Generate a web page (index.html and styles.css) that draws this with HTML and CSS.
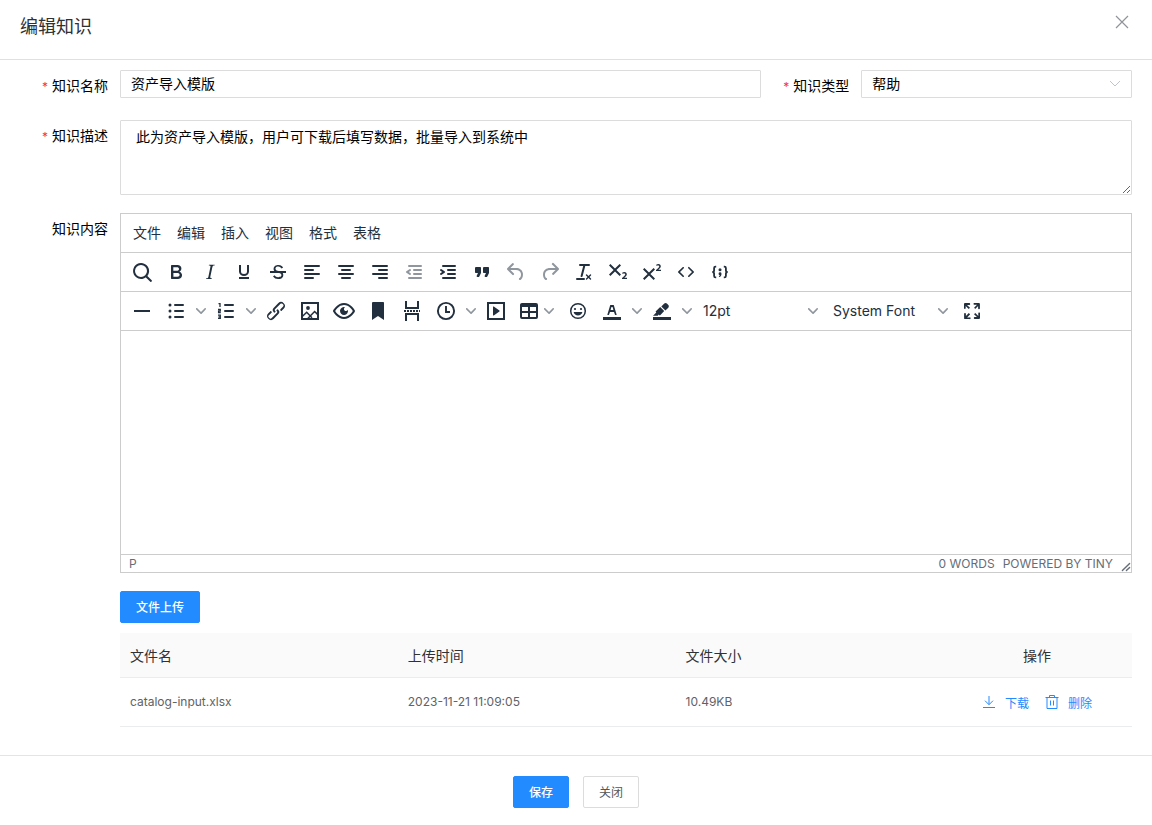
FILE: index.html
```html
<!DOCTYPE html>
<html lang="zh-CN">
<head>
<meta charset="utf-8">
<meta name="viewport" content="width=device-width, initial-scale=1">
<title>编辑知识</title>
<link rel="stylesheet" href="styles.css">
</head>
<body>
<svg class="sprite" aria-hidden="true">
  <symbol id="chevron" viewBox="0 0 10 10"><path d="M8.7 2.2c.3-.3.8-.3 1 0 .4.4.4.9 0 1.2L5.7 7.8c-.3.3-.9.3-1.2 0L.2 3.4a.8.8 0 0 1 0-1.2c.3-.3.8-.3 1.1 0L5 6l3.7-3.8z"/></symbol>
</svg>
<div class="dialog" role="dialog" aria-labelledby="dialog-title">
  <header class="dialog-header">
    <h1 class="dialog-title" id="dialog-title">编辑知识</h1>
    <button class="close" type="button" aria-label="关闭对话框"><svg width="14" height="14" viewBox="0 0 14 14"><path d="M1 1l12 12M13 1L1 13" fill="none" stroke="#909399" stroke-width="1.2"/></svg></button>
  </header>

  <form class="form" id="knowledge">
    <div class="row row-split">
      <label class="label required" for="name">知识名称</label>
      <input class="field" id="name" type="text" value="资产导入模版">
      <label class="label required" for="type">知识类型</label>
      <div class="select-wrap">
        <select class="field" id="type"><option>帮助</option></select>
        <svg class="select-arrow" width="12" height="8" viewBox="0 0 12 8"><path d="M1 1l5 5 5-5" fill="none" stroke="#c0c4cc"/></svg>
      </div>
    </div>
    <div class="row">
      <label class="label required" for="desc">知识描述</label>
      <textarea class="field area" id="desc">此为资产导入模版，用户可下载后填写数据，批量导入到系统中</textarea>
    </div>
    <div class="row">
      <span class="label" id="content-label">知识内容</span>
      <div class="content">
        <div class="editor">
          <div class="menubar">
            <button type="button">文件</button><button type="button">编辑</button><button type="button">插入</button><button type="button">视图</button><button type="button">格式</button><button type="button">表格</button>
          </div>
          <div class="toolbar">
            <button class="tool" type="button" aria-label="查找"><svg viewBox="0 0 24 24"><path d="M16 17.3a8 8 0 1 1 1.4-1.4l4.3 4.4a1 1 0 0 1-1.4 1.4l-4.4-4.3zm-5-.3a6 6 0 1 0 0-12 6 6 0 0 0 0 12z"/></svg></button>
            <button class="tool" type="button" aria-label="粗体"><svg viewBox="0 0 24 24"><path d="M7.8 19c-.3 0-.5 0-.6-.2l-.2-.5V5.7c0-.2 0-.4.2-.5l.6-.2h5c1.5 0 2.7.3 3.5 1 .7.6 1.1 1.4 1.1 2.5a3 3 0 0 1-.6 1.9c-.4.6-1 1-1.6 1.2.4.1.9.3 1.3.6s.8.7 1 1.2c.4.4.5 1 .5 1.6 0 1.3-.4 2.3-1.3 3-.8.7-2.1 1-3.8 1H7.8zm5-8.3c.6 0 1.2-.1 1.6-.5.4-.3.6-.7.6-1.3 0-1.1-.8-1.7-2.3-1.7H9.3v3.5h3.4zm.5 6c.7 0 1.3-.1 1.7-.4.4-.4.6-.9.6-1.5s-.2-1-.7-1.4c-.4-.3-1-.4-2-.4H9.4v3.8h4z" fill-rule="evenodd"/></svg></button>
            <button class="tool" type="button" aria-label="斜体"><svg viewBox="0 0 24 24"><path d="M16.7 4.7l-.1.9h-.3c-.6 0-1 0-1.4.3-.3.3-.4.6-.5 1.1l-2.1 9.8v.6c0 .5.4.8 1.4.8h.2l-.2.8H8l.2-.8h.2c1.1 0 1.8-.5 2-1.5l2-9.8.1-.5c0-.6-.4-.8-1.4-.8h-.3l.2-.9h5.8z"/></svg></button>
            <button class="tool" type="button" aria-label="下划线"><svg viewBox="0 0 24 24"><path d="M8 5v6.5c0 2 1.8 3.5 4 3.5s4-1.5 4-3.5V5" fill="none" stroke="currentColor" stroke-width="2"/><path d="M7 17h10v2H7z"/></svg></button>
            <button class="tool" type="button" aria-label="删除线"><svg viewBox="0 0 24 24"><path d="M15.6 8.5c-.5-.7-1-1.1-1.3-1.3-.6-.4-1.3-.6-2-.6-2.7 0-2.8 1.7-2.8 2.1 0 1.6 1.8 2 3.2 2.3 4.4.9 4.6 2.8 4.6 3.9 0 1.4-.7 4.1-5 4.1A6.2 6.2 0 0 1 7 16.4l1.5-1.1c.4.6 1.6 2 3.7 2 1.6 0 2.5-.4 3-1.2.4-.8.3-2-.8-2.6-.7-.4-1.6-.7-2.9-1-1-.2-3.9-.8-3.9-3.6C7.6 6 10.3 5 12.4 5c2.9 0 4.2 1.6 4.7 2.4l-1.5 1.1z"/><path d="M4 11h16v2H4z"/></svg></button>
            <button class="tool" type="button" aria-label="左对齐"><svg viewBox="0 0 24 24"><path d="M5 6h14M5 10h8M5 14h14M5 18h8" class="bars"/></svg></button>
            <button class="tool" type="button" aria-label="居中"><svg viewBox="0 0 24 24"><path d="M5 6h14M8 10h8M5 14h14M8 18h8" class="bars"/></svg></button>
            <button class="tool" type="button" aria-label="右对齐"><svg viewBox="0 0 24 24"><path d="M5 6h14M11 10h8M5 14h14M11 18h8" class="bars"/></svg></button>
            <button class="tool" type="button" aria-label="减少缩进" disabled><svg viewBox="0 0 24 24"><path d="M7 6h12M12 10h7M12 14h7M7 18h12" class="bars"/><path d="M8.6 13.2a1 1 0 0 1-1.2 1.6l-3-2a1 1 0 0 1 0-1.6l3-2a1 1 0 0 1 1.2 1.6L6.8 12l1.8 1.2z"/></svg></button>
            <button class="tool" type="button" aria-label="增加缩进"><svg viewBox="0 0 24 24"><path d="M7 6h12M12 10h7M12 14h7M7 18h12" class="bars"/><path d="M4.4 13.2L6.2 12l-1.8-1.2a1 1 0 0 1 1.2-1.6l3 2a1 1 0 0 1 0 1.6l-3 2a1 1 0 1 1-1.2-1.6z"/></svg></button>
            <button class="tool" type="button" aria-label="引用"><svg viewBox="0 0 24 24"><path d="M7.5 17h.9c.4 0 .7-.2.9-.6L11 13V8c0-.6-.4-1-1-1H6a1 1 0 0 0-1 1v4c0 .6.4 1 1 1h2l-1.3 2.7a1 1 0 0 0 .8 1.3zm8 0h.9c.4 0 .7-.2.9-.6L19 13V8c0-.6-.4-1-1-1h-4a1 1 0 0 0-1 1v4c0 .6.4 1 1 1h2l-1.3 2.7a1 1 0 0 0 .8 1.3z"/></svg></button>
            <button class="tool" type="button" aria-label="撤销" disabled><svg viewBox="0 0 24 24"><path d="M6.4 8H12c3.7 0 6.2 2 6.8 5.1.6 2.7-.4 5.6-2.3 6.8a1 1 0 0 1-1-1.8c1.1-.6 1.8-2.7 1.4-4.6-.5-2.1-2.1-3.5-4.9-3.5H6.4l3.3 3.3a1 1 0 1 1-1.4 1.4l-5-5a1 1 0 0 1 0-1.4l5-5a1 1 0 0 1 1.4 1.4L6.4 8z"/></svg></button>
            <button class="tool" type="button" aria-label="重做" disabled><svg viewBox="0 0 24 24"><path d="M17.6 10H12c-2.8 0-4.4 1.4-4.9 3.5-.4 2 .3 4 1.4 4.6a1 1 0 1 1-1 1.8c-2-1.2-2.9-4.1-2.3-6.8.6-3 3-5.1 6.8-5.1h5.6l-3.3-3.3a1 1 0 1 1 1.4-1.4l5 5a1 1 0 0 1 0 1.4l-5 5a1 1 0 0 1-1.4-1.4l3.3-3.3z"/></svg></button>
            <button class="tool" type="button" aria-label="清除格式"><svg viewBox="0 0 24 24"><path d="M13.2 6a1 1 0 0 1 0 .2l-2.6 10a1 1 0 0 1-1 .8h-.2a.8.8 0 0 1-.8-1l2.6-10H8a1 1 0 1 1 0-2h9a1 1 0 0 1 0 2h-3.8zM5 18h7a1 1 0 0 1 0 2H5a1 1 0 0 1 0-2zm13 1.5L16.5 18 15 19.5a.7.7 0 0 1-1-1l1.5-1.5-1.5-1.5a.7.7 0 0 1 1-1l1.5 1.5 1.5-1.5a.7.7 0 0 1 1 1L17.5 17l1.5 1.5a.7.7 0 0 1-1 1z"/></svg></button>
            <button class="tool" type="button" aria-label="下标"><svg viewBox="0 0 24 24"><path d="M10.4 10l4.6 4.6-1.4 1.4L9 11.4 4.4 16 3 14.6 7.6 10 3 5.4 4.4 4 9 8.6 13.6 4 15 5.4 10.4 10zM21 19h-5v-1l1-.8 1.7-1.6c.3-.4.5-.8.5-1.2 0-.3 0-.6-.2-.7-.2-.2-.5-.3-.9-.3a2 2 0 0 0-.8.2l-.7.3-.4-1.1 1-.6 1.2-.2c.8 0 1.4.3 1.8.7.4.4.6.9.6 1.5s-.2 1.1-.5 1.6a8 8 0 0 1-1.3 1.3l-.6.6H21V19z"/></svg></button>
            <button class="tool" type="button" aria-label="上标"><svg viewBox="0 0 24 24"><path d="M15 9.4L10.4 14l4.6 4.6-1.4 1.4L9 15.4 4.4 20 3 18.6 7.6 14 3 9.4 4.4 8 9 12.6 13.6 8 15 9.4zM21 11h-5v-1l1-.8 1.7-1.6c.3-.4.5-.8.5-1.2 0-.3 0-.6-.2-.7-.2-.2-.5-.3-.9-.3a2 2 0 0 0-.8.2l-.7.3-.4-1.1 1-.6 1.2-.2c.8 0 1.4.3 1.8.7.4.4.6.9.6 1.5s-.2 1.1-.5 1.6a8 8 0 0 1-1.3 1.3l-.6.6H21V11z"/></svg></button>
            <button class="tool" type="button" aria-label="源代码"><svg viewBox="0 0 24 24"><path d="M9.8 15.7c.3.3.3.8 0 1-.3.4-.9.4-1.2 0l-4.4-4.1a.8.8 0 0 1 0-1.2l4.4-4.2c.3-.3.9-.3 1.2 0 .3.3.3.8 0 1.1L6 12l3.8 3.7zM14.2 15.7c-.3.3-.3.8 0 1 .4.4.9.4 1.2 0l4.4-4.1c.3-.3.3-.9 0-1.2l-4.4-4.2a.8.8 0 0 0-1.2 0c-.3.3-.3.8 0 1.1L18 12l-3.8 3.7z"/></svg></button>
            <button class="tool" type="button" aria-label="代码示例"><svg viewBox="0 0 24 24"><path d="M8.2 6.6h-.6c-1 0-1.5.5-1.5 1.5v2.1c0 1-.6 1.8-1.8 1.8 1.2 0 1.8.8 1.8 1.8v2.1c0 1 .5 1.5 1.5 1.5h.6M15.8 6.6h.6c1 0 1.5.5 1.5 1.5v2.1c0 1 .6 1.8 1.8 1.8-1.2 0-1.8.8-1.8 1.8v2.1c0 1-.5 1.5-1.5 1.5h-.6" fill="none" stroke="currentColor" stroke-width="1.8"/><circle cx="12" cy="9.7" r="1.5"/><path d="M10.6 13.7a1.4 1.4 0 0 1 2.9 0c0 1.8-.8 3-2.3 3.4l-.4-.8c.6-.3.9-.7 1-1.2-.7 0-1.2-.7-1.2-1.4z"/></svg></button>
          </div>
          <div class="toolbar">
            <button class="tool" type="button" aria-label="水平线"><svg viewBox="0 0 24 24"><path d="M4 11h16v2H4z"/></svg></button>
            <button class="tool" type="button" aria-label="项目符号"><svg viewBox="0 0 24 24"><path d="M11 6h8M11 12h8M11 18h8" class="bars"/><circle cx="6" cy="6" r="1.5"/><circle cx="6" cy="12" r="1.5"/><circle cx="6" cy="18" r="1.5"/></svg></button>
            <button class="more" type="button" aria-label="项目符号样式"><svg><use href="#chevron"/></svg></button>
            <button class="tool" type="button" aria-label="编号列表"><svg viewBox="0 0 24 24"><path d="M11 6h8M11 12h8M11 18h8" class="bars"/><path d="M4.5 4.6H6V8M4 10.3h2.3v1.5H4.6v1.7h2.2M4 16.2h2.3v3.2H4M4.5 17.8h1.8" fill="none" stroke="currentColor" stroke-width="1.3"/></svg></button>
            <button class="more" type="button" aria-label="编号样式"><svg><use href="#chevron"/></svg></button>
            <button class="tool" type="button" aria-label="链接"><svg viewBox="0 0 24 24"><path d="M6.2 12.3a1 1 0 0 1 1.4 1.4l-2.1 2a2 2 0 1 0 2.7 2.8l4.8-4.8a1 1 0 0 0 0-1.4 1 1 0 1 1 1.4-1.3 2.9 2.9 0 0 1 0 4L9.6 20a3.9 3.9 0 0 1-5.5-5.5l2-2zm11.6-.6a1 1 0 0 1-1.4-1.4l2-2a2 2 0 1 0-2.6-2.8L11 10.3a1 1 0 0 0 0 1.4A1 1 0 1 1 9.6 13a2.9 2.9 0 0 1 0-4L14.4 4a3.9 3.9 0 0 1 5.5 5.5l-2 2z"/></svg></button>
            <button class="tool" type="button" aria-label="图片"><svg viewBox="0 0 24 24"><path d="M4 4h16v16H4z" fill="none" stroke="currentColor" stroke-width="2"/><path d="M4.5 17.3l4.2-4.1 5.3 5.6M9.8 19.5l6.8-7 3 2.9" fill="none" stroke="currentColor" stroke-width="1.5"/><circle cx="10" cy="9" r="1.9"/></svg></button>
            <button class="tool" type="button" aria-label="预览"><svg viewBox="0 0 24 24"><path d="M3.5 12.5c.5.8 1.1 1.6 1.8 2.3 2 2 4.2 3.2 6.7 3.2s4.7-1.2 6.7-3.2a16.2 16.2 0 0 0 2.1-2.8 15.7 15.7 0 0 0-2.1-2.8c-2-2-4.2-3.2-6.7-3.2a9.3 9.3 0 0 0-6.7 3.2A16.2 16.2 0 0 0 3.2 12c0 .2.2.3.3.5zm-2.4-1l.7-1.2L4 7.8C6.2 5.4 8.9 4 12 4c3 0 5.8 1.4 8.1 3.8a18.2 18.2 0 0 1 2.8 3.7v1l-.7 1.2-2.1 2.5c-2.3 2.4-5 3.8-8.1 3.8-3 0-5.8-1.4-8.1-3.8a18.2 18.2 0 0 1-2.8-3.7 1 1 0 0 1 0-1zm12-3.3a2 2 0 1 0 2.7 2.6 4 4 0 1 1-2.6-2.6z"/></svg></button>
            <button class="tool" type="button" aria-label="书签"><svg viewBox="0 0 24 24"><path d="M6 4v17l6-4 6 4V4c0-.6-.4-1-1-1H7a1 1 0 0 0-1 1z"/></svg></button>
            <button class="tool" type="button" aria-label="分页符"><svg viewBox="0 0 24 24"><path d="M6 2v7h12V2M6 22v-7h12v7" fill="none" stroke="currentColor" stroke-width="2"/><path d="M4 12h16" fill="none" stroke="currentColor" stroke-width="2" stroke-dasharray="2 1"/></svg></button>
            <button class="tool" type="button" aria-label="日期时间"><svg viewBox="0 0 24 24"><path d="M12 3.9a8.1 8.1 0 1 0 0 16.2 8.1 8.1 0 0 0 0-16.2zM12 7v6h4" fill="none" stroke="currentColor" stroke-width="1.9"/></svg></button>
            <button class="more" type="button" aria-label="日期格式"><svg><use href="#chevron"/></svg></button>
            <button class="tool" type="button" aria-label="媒体"><svg viewBox="0 0 24 24"><path d="M4 4h16v16H4z" fill="none" stroke="currentColor" stroke-width="2"/><path d="M9.8 7.6l5.6 4a.5.5 0 0 1 0 .8l-5.6 4A.5.5 0 0 1 9 16V8a.5.5 0 0 1 .8-.4z"/></svg></button>
            <button class="tool tool-menu" type="button" aria-label="表格"><svg viewBox="0 0 24 24"><path fill-rule="evenodd" d="M19 4a2 2 0 0 1 2 2v12a2 2 0 0 1-2 2H5a2 2 0 0 1-2-2V6c0-1.1.9-2 2-2h14zM5 14v4h6v-4H5zm14 0h-6v4h6v-4zm0-6h-6v4h6V8zM5 12h6V8H5v4z"/></svg><svg class="mini"><use href="#chevron"/></svg></button>
            <button class="tool" type="button" aria-label="表情"><svg viewBox="0 0 24 24"><circle cx="12" cy="12" r="7.3" fill="none" stroke="currentColor" stroke-width="1.5"/><circle cx="9" cy="10" r="1.1"/><circle cx="15" cy="10" r="1.1"/><path d="M12 16.5c2.1 0 4-1.5 4.4-3.5H7.6c.5 2 2.3 3.5 4.4 3.5z"/></svg></button>
            <button class="tool" type="button" aria-label="文字颜色"><svg viewBox="0 0 24 24"><path d="M3 18h18v3H3z"/><path fill-rule="evenodd" d="M8.7 16h-.8a.5.5 0 0 1-.5-.6l2.7-9c.1-.3.3-.4.5-.4h2.8c.2 0 .4.1.5.4l2.7 9a.5.5 0 0 1-.5.6h-.8a.5.5 0 0 1-.4-.4l-.7-2.2c0-.3-.3-.4-.5-.4h-3.4c-.2 0-.4.1-.5.4l-.7 2.2c0 .3-.2.4-.4.4zm2.6-7.6l-.6 2a.5.5 0 0 0 .5.6h1.6a.5.5 0 0 0 .5-.6l-.6-2c0-.3-.3-.4-.5-.4h-.4c-.2 0-.4.1-.5.4z"/></svg></button>
            <button class="more" type="button" aria-label="选择文字颜色"><svg><use href="#chevron"/></svg></button>
            <button class="tool" type="button" aria-label="背景颜色"><svg viewBox="0 0 24 24"><path d="M3 18h18v3H3z"/><path d="M7.7 16.7H3l3.3-3.3-.7-.8L10.2 8l4 4.1-4 4.2c-.2.2-.6.2-.8 0l-.6-.7-1.1 1.1zm3.6-9.3l3-2.9a2 2 0 0 1 2.6 0L18.3 6c.7.7.7 2 0 2.7l-2.9 2.9z"/></svg></button>
            <button class="more" type="button" aria-label="选择背景颜色"><svg><use href="#chevron"/></svg></button>
            <div class="tool-select"><select aria-label="字号"><option>12pt</option></select><svg><use href="#chevron"/></svg></div>
            <div class="tool-select"><select aria-label="字体"><option>System Font</option></select><svg><use href="#chevron"/></svg></div>
            <button class="tool" type="button" aria-label="全屏"><svg viewBox="0 0 24 24"><path d="M15.3 10l-1.2-1.3 2.9-3h-2.3a.9.9 0 1 1 0-1.7H19c.5 0 .9.4.9.9v4.4a.9.9 0 1 1-1.8 0V7l-2.9 3zm0 4l3 3v-2.3a.9.9 0 1 1 1.7 0V19c0 .5-.4.9-.9.9h-4.4a.9.9 0 1 1 0-1.8H17l-3-2.9 1.3-1.2zM10 15.4l-2.9 3h2.3a.9.9 0 1 1 0 1.7H5a.9.9 0 0 1-.9-.9v-4.4a.9.9 0 1 1 1.8 0V17l2.9-3 1.2 1.3zM8.7 10L5.7 7v2.3a.9.9 0 0 1-1.7 0V5c0-.5.4-.9.9-.9h4.4a.9.9 0 0 1 0 1.8H7l3 2.9-1.3 1.2z"/></svg></button>
          </div>
          <div class="edit-area" contenteditable="true" role="textbox" aria-multiline="true" aria-labelledby="content-label"></div>
          <div class="statusbar">
            <span class="path">P</span>
            <span>0 WORDS</span>
            <a href="#">POWERED BY TINY</a>
            <svg class="resize" width="10" height="10" viewBox="0 0 10 10"><path d="M1.4 8.6l7.2-7.2M5.4 8.6l3.2-3.2" fill="none" stroke="currentColor" stroke-width="1.4" stroke-linecap="round"/></svg>
          </div>
        </div>
        <button class="btn primary upload" type="button">文件上传</button>
        <table class="files">
          <colgroup><col class="col-data"><col class="col-data"><col><col class="col-action"></colgroup>
          <thead><tr><th>文件名</th><th>上传时间</th><th>文件大小</th><th class="center">操作</th></tr></thead>
          <tbody><tr>
            <td>catalog-input.xlsx</td><td>2023-11-21 11:09:05</td><td>10.49KB</td>
            <td class="center">
              <div class="actions">
                <a href="#"><svg width="14" height="14" viewBox="0 0 14 14"><path d="M7 1v8.5M3 5.7l4 4 4-4M1 12.5h12" fill="none" stroke="currentColor"/></svg>下载</a>
                <a href="#"><svg width="14" height="14" viewBox="0 0 14 14"><path d="M.5 2.5h13M2 2.5v11h10v-11M4.5 2.5v-2h5v2M5.5 5.5v5M8.5 5.5v5" fill="none" stroke="currentColor"/></svg>删除</a>
              </div>
            </td>
          </tr></tbody>
        </table>
      </div>
    </div>
  </form>

  <footer class="dialog-footer">
    <button class="btn primary" type="submit" form="knowledge">保存</button>
    <button class="btn" type="button">关闭</button>
  </footer>
</div>
</body>
</html>
```
FILE: styles.css
```css
* {
  box-sizing: border-box;
}

body {
  margin: 0;
  background: #fff;
  color: #000;
  font-family: Inter, "Noto Sans CJK SC", sans-serif;
  font-size: 14px;
}

button,
input,
select,
textarea {
  margin: 0;
  font: inherit;
  color: inherit;
}

a {
  color: inherit;
  text-decoration: none;
}

.sprite {
  display: none;
}

.dialog-header {
  display: flex;
  justify-content: space-between;
  align-items: flex-start;
  padding: 14px 20px 20px;
  border-bottom: 1px solid #e0e0e0;
}

.dialog-title {
  margin: 0;
  font-size: 18px;
  line-height: 25px;
  font-weight: 400;
  color: #303133;
}

.close {
  display: flex;
  padding: 1px 3px;
  border: 0;
  background: none;
}

.form {
  padding: 10px 20px 28px 0;
}

.row {
  display: grid;
  grid-template-columns: 120px minmax(0, 1fr);
  align-items: start;
  margin-bottom: 18px;
}

.row:last-child {
  margin-bottom: 0;
}

.row-split {
  grid-template-columns: 120px 45fr 100px 19fr;
}

.label {
  padding-right: 12px;
  line-height: 32px;
  text-align: right;
}

.required::before {
  content: "*";
  margin-right: 4px;
  font-size: 12px;
  line-height: 1;
  color: #e63946;
}

.field {
  width: 100%;
  height: 28px;
  padding: 0 10px 2px;
  border: 1px solid #dcdcdc;
  border-radius: 1px;
  background: #fff;
  outline: 0;
}

.area {
  display: block;
  height: 75px;
  padding: 5px 15px;
  line-height: 21px;
  resize: vertical;
}

.select-wrap,
.tool-select {
  display: grid;
  align-items: center;
}

.select-wrap > *,
.tool-select > * {
  grid-area: 1 / 1;
}

.select-wrap select,
.tool-select select {
  appearance: none;
}

.select-arrow {
  justify-self: end;
  margin-right: 11px;
  pointer-events: none;
}

.editor {
  display: flex;
  flex-direction: column;
  height: 360px;
  border: 1px solid #ccc;
  color: #222f3e;
}

.menubar,
.toolbar {
  display: flex;
  align-items: center;
  height: 39px;
  padding: 0 4px;
  border-bottom: 1px solid #ccc;
  flex: none;
}

.menubar button {
  padding: 0 8px;
  border: 0;
  background: none;
  line-height: 34px;
}

.tool,
.more {
  display: flex;
  align-items: center;
  justify-content: center;
  width: 34px;
  height: 34px;
  padding: 0;
  border: 0;
  background: none;
}

.tool svg {
  width: 24px;
  height: 24px;
  fill: currentColor;
}

.tool:disabled {
  color: #222f3e;
  opacity: 0.5;
}

.tool .bars {
  fill: none;
  stroke: currentColor;
  stroke-width: 2;
  stroke-linecap: round;
}

.more {
  width: 16px;
}

.more svg,
.tool .mini,
.tool-select svg {
  width: 10px;
  height: 10px;
  fill: #222f3e;
  opacity: 0.5;
}

.tool-menu {
  width: 48px;
  gap: 3px;
  padding-right: 4px;
}

.tool-select {
  width: 130px;
}

.tool-select select {
  width: 100%;
  height: 34px;
  padding: 0 8px 2px;
  border: 0;
  background: none;
}

.tool-select svg {
  justify-self: end;
  margin-right: 7px;
  pointer-events: none;
}

.edit-area {
  flex: 1;
  outline: 0;
}

.statusbar {
  display: flex;
  align-items: center;
  gap: 8px;
  height: 18px;
  padding-left: 8px;
  border-top: 1px solid #ccc;
  font-size: 12px;
  color: #646d78;
}

.path {
  flex: 1;
}

.resize {
  align-self: flex-end;
}

.btn {
  height: 32px;
  padding: 0 15px 2px;
  border: 1px solid #dcdcdc;
  border-radius: 2px;
  background: #fff;
  font-size: 12px;
  color: #555;
}

.primary {
  border-color: #228bff;
  background: #228bff;
  color: #fff;
  font-weight: 500;
}

.upload {
  display: block;
  margin: 18px 0 10px;
}

.files {
  width: 100%;
  border-collapse: separate;
  border-spacing: 0;
  table-layout: fixed;
}

.col-data {
  width: 27.45%;
}

.col-action {
  width: 190px;
}

.files th,
.files td {
  padding: 0 10px;
  border-bottom: 1px solid #ebeced;
  text-align: left;
}

.files th {
  height: 45px;
  background: #fafafa;
  font-weight: 400;
  color: #303133;
}

.files td {
  height: 49px;
  padding-bottom: 2px;
  font-size: 12px;
  color: #606266;
}

.files .center {
  padding-bottom: 0;
  text-align: center;
}

.actions {
  display: flex;
  justify-content: center;
  gap: 16px;
  color: #228bff;
}

.actions a {
  display: flex;
  align-items: center;
  gap: 9px;
}

.dialog-footer {
  display: flex;
  justify-content: center;
  gap: 14px;
  padding: 20px;
  border-top: 1px solid #e4e4e4;
}
```
